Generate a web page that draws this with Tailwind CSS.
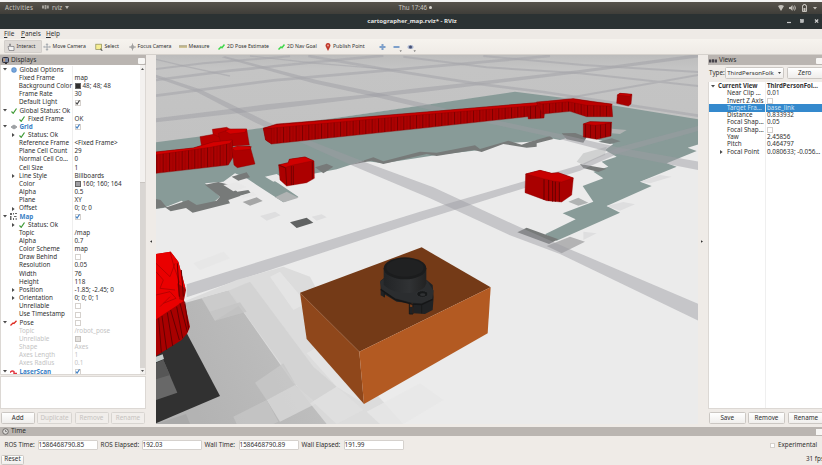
<!DOCTYPE html>
<html lang="en">
<head>
<meta charset="utf-8">
<title>cartographer_map.rviz* - RViz</title>
<script src="https://cdn.jsdelivr.net/npm/@tailwindcss/browser@4"></script>
</head>
<body class="w-[822px] h-[465px] overflow-hidden bg-[#efebe7] text-[#303030] text-[6.3px] leading-none whitespace-nowrap font-['Noto_Sans','Open_Sans',sans-serif]">
<div class="w-[822px] h-[465px] flex flex-col overflow-hidden">
  <!-- desktop bar -->
  <header class="h-[14px] shrink-0 border-t-2 border-[#f4f4f3] bg-linear-to-b from-[#57534b] to-[#3f3e39] grid grid-cols-3 items-center text-[#c9c6c0] text-[6.2px]">
    <div class="flex items-center pl-[5px]">
      <span class="tracking-[0.25px] w-[37px]">Activities</span>
      <svg class="w-[7px] h-[5px] mr-[3px]" viewBox="0 0 7 5"><path d="M0 .5h2v3H0zM2.6 0h1.7v4.2H2.600zM4.800 .5h2v3h-2z" fill="#a5a29b"/></svg>
      <span class="w-[12.500px]">rviz</span>
      <svg class="w-[4px] h-[3px]" viewBox="0 0 4 3"><path d="M0 0h4L2 3z" fill="#b9b6b0"/></svg>
    </div>
    <div class="flex items-center justify-center pl-[8px] gap-[1.500px]">Thu 17:46 <span class="w-[3px] h-[3px] rounded-full bg-[#d5d2cc]"></span></div>
    <div class="flex items-center justify-end pr-[5px]">
      <svg class="w-[40px] h-[8px]" viewBox="0 0 40 8" fill="#c3c0ba"><path d="M1 2Q4 0 7 2L4 7z"/><path d="M12 3h1.500l2-2v6l-2-2h-1.500z"/><path d="M16.300 2.500q1.300 1.500 0 3M17.500 1.500q2 2.500 0 5" fill="none" stroke="#c3c0ba" stroke-width=".9"/><path d="M25.500 1.500h1V.5h2v1h1V7.500h-4z" fill="none" stroke="#c3c0ba"/><path d="M26.500 4h2v3h-2zM36 3h4l-2 2.500z"/></svg>
    </div>
  </header>
  <!-- window title -->
  <div class="h-[15px] shrink-0 bg-[#2b3233] flex items-center text-[#e4e4e2]">
    <div class="w-[100px]"></div>
    <div class="flex-1 text-center font-bold text-[6.05px] pl-[2px]">cartographer_map.rviz* - RViz</div>
    <svg class="w-[100px] h-[15px]" viewBox="0 0 100 15"><path d="M65 8.500h4" stroke="#c8c8c8" stroke-width="1.200"/><rect x="78.500" y="5.500" width="3" height="3" fill="#b9bcbc" stroke="#d8d8d8" stroke-width=".5"/><path d="M93 5.500l3.200 3.200M96.200 5.500l-3.200 3.200" stroke="#d0d0d0" stroke-width="1.200"/></svg>
  </div>
  <!-- menu -->
  <nav class="h-[10px] shrink-0 bg-[#eeeae6] flex items-center pl-[4px] pt-[1px] text-[6.400px]">
    <span class="w-[17px]"><u>F</u>ile</span><span class="w-[25px]"><u>P</u>anels</span><span><u>H</u>elp</span>
  </nav>
  <!-- tools -->
  <div class="h-[16px] shrink-0 bg-linear-to-b from-[#f6f3ee] to-[#efebe6] border-b border-[#d5d1cc] flex items-center text-[5.150px]">
    <div class="w-[38px] h-[13px] ml-[4px] bg-[#dedad6] rounded-[1px] border border-[#d3cfcb] flex items-center pl-[2px] gap-[1.500px]"><svg class="w-[8px] h-[8px]" viewBox="0 0 8 8"><path d="M1 3.500h1.500V1h1v2.500H7V7.500H2z" fill="#f2f2f2" stroke="#77757a" stroke-width=".7"/></svg>Interact</div>
    <div class="w-[49px] ml-[1px] flex items-center gap-[1.500px]"><svg class="w-[8px] h-[8px]" viewBox="0 0 8 8"><path d="M4 0l1.500 2H4.600v1.500H6.500V2.500L8 4 6.500 5V4.500H4.600V6h1L4 8 2.500 6h1V4.500H1.500V5L0 4l1.500-1.500v1h2V2h-1z" fill="#a7acb1"/></svg>Move Camera</div>
    <div class="w-[34px] ml-[3px] flex items-center gap-[1.500px]"><svg class="w-[8px] h-[8px]" viewBox="0 0 8 8"><rect x=".8" y="1.200" width="5.800" height="5.200" fill="#f6ee93" stroke="#8b8b55" stroke-width=".7"/><path d="M5 5l3 2.500-2 .3z" fill="#555"/></svg>Select</div>
    <div class="w-[50px] flex items-center gap-[1.500px]"><svg class="w-[7px] h-[8px]" viewBox="0 0 8 8"><circle cx="4" cy="4" r="1.700" fill="none" stroke="#8e8e8e"/><path d="M4 0v8M0 4h8" stroke="#9b9b9b"/></svg>Focus Camera</div>
    <div class="w-[39px] flex items-center gap-[1.500px]"><svg class="w-[8px] h-[8px]" viewBox="0 0 8 8"><rect y="2.800" width="8" height="2.200" fill="#cfc396"/><path d="M0 2.800h8" stroke="#8a8566" stroke-width=".7"/></svg>Measure</div>
    <div class="w-[60px] flex items-center gap-[2px]"><svg class="w-[7px] h-[8px]" viewBox="0 0 7 8"><path d="M.5 6.500L3 4l1 .8L6.500 1.500" fill="none" stroke="#3dd648" stroke-width="1.500"/></svg>2D Pose Estimate</div>
    <div class="w-[46px] flex items-center gap-[2px]"><svg class="w-[7px] h-[8px]" viewBox="0 0 7 8"><path d="M.5 6.500L3 4l1 .8L6.500 1.500" fill="none" stroke="#3dd648" stroke-width="1.500"/></svg>2D Nav Goal</div>
    <div class="w-[50px] ml-[1px] flex items-center gap-[2px]"><svg class="w-[6px] h-[8px]" viewBox="0 0 6 8"><path d="M3 0a2.500 2.500 0 0 1 2 4L3 8 1 4a2.500 2.500 0 0 1 2-4z" fill="#c0392b"/><circle cx="3" cy="2.500" r=".9" fill="#f0a89f"/></svg>Publish Point</div>
    <svg class="w-[45px] h-[12px]" viewBox="0 0 45 12"><path d="M7.500 3v6M4.500 6h6" stroke="#7d9fca" stroke-width="2"/><path d="M18.500 6h6" stroke="#7d9fca" stroke-width="2"/><path d="M24.500 9.500h2.400l-1.200 1.300zM38.500 9.500h2.400l-1.200 1.300z" fill="#555"/><ellipse cx="35.500" cy="6" rx="3" ry="2" fill="#a9b4cf"/><circle cx="35.500" cy="6" r="1.500" fill="#454f72"/></svg>
  </div>

  <!-- docks and 3D view -->
  <main class="h-[372px] shrink-0 flex">
    <section class="w-[146px] flex flex-col">
      <div class="h-[10px] shrink-0 bg-[#bab5b1] flex items-center pl-[2px] pr-[1px] pt-[1px] text-[6.500px]">
        <svg class="w-[7px] h-[7px] mr-[2px]" viewBox="0 0 7 7"><rect x=".5" y=".5" width="6" height="5" rx="1" fill="#7c8ba8" stroke="#33313d"/><path d="M1.500 1.500h1.500v3H1.500z" fill="#c96"/><path d="M3 6.500h2" stroke="#333"/></svg>
        <span class="flex-1">Displays</span><span class="w-[7px] h-[6px] bg-[#f7f6f4] rounded-[1px]"></span>
      </div>
      <div class="h-[310px] shrink-0 flex border border-t-0 border-[#dcd8d4] bg-white overflow-hidden">
        <div id="displays" class="flex-1 h-[309px] pt-[0.8px] overflow-hidden"></div>
        <div class="w-[5.500px] bg-[#d9d6d3] flex flex-col items-center justify-between">
          <div class="w-full h-[118px] bg-[#f3f1ef] border-b border-[#c9c5c1] flex justify-center pt-[3px]"><svg class="w-[3px] h-[2px]" viewBox="0 0 3 2"><path d="M0 2h3L1.500 0z" fill="#555"/></svg></div>
          <div class="w-full h-[6px] bg-[#f3f1ef] flex justify-center pt-[2px]"><svg class="w-[3px] h-[2px]" viewBox="0 0 3 2"><path d="M0 0h3L1.500 2z" fill="#555"/></svg></div>
        </div>
      </div>
      <div class="h-[33px] shrink-0 mt-[1px] bg-white border border-[#dcd8d4]"></div>
      <div class="flex pt-[3px] pl-[1px] gap-[2.500px]">
        <div class="w-[33.500px] h-[11.500px] rounded-[1.500px] border border-[#cbc7c3] bg-linear-to-b from-white to-[#f0eeec] flex items-center justify-center">Add</div>
        <div class="w-[35px] h-[11.500px] rounded-[1.500px] border border-[#d8d5d1] bg-[#f1eeeb] text-[#c6c3c0] flex items-center justify-center">Duplicate</div>
        <div class="w-[34px] h-[11.500px] rounded-[1.500px] border border-[#d8d5d1] bg-[#f1eeeb] text-[#c6c3c0] flex items-center justify-center">Remove</div>
        <div class="w-[34px] h-[11.500px] rounded-[1.500px] border border-[#d8d5d1] bg-[#f1eeeb] text-[#c6c3c0] flex items-center justify-center">Rename</div>
      </div>
    </section>
    <div class="w-[10px] flex items-center justify-center pr-[1px]"><svg class="w-[2px] h-[3px]" viewBox="0 0 3 4"><path d="M3 0v4L0 2z" fill="#333"/></svg></div>

    <svg class="w-[542px] h-[369px] shrink-0" viewBox="18 15 1626 1107" preserveAspectRatio="none">
      <defs>
        <linearGradient id="sky" x1="0" y1="0" x2="0" y2="1"><stop offset="0" stop-color="#bcbcbc"/><stop offset=".15" stop-color="#c4c4c4"/><stop offset="1" stop-color="#c2c2c2"/></linearGradient>
        <linearGradient id="floor" gradientUnits="userSpaceOnUse" x1="100" y1="1000" x2="620" y2="760"><stop offset="0" stop-color="#b3b3b3"/><stop offset=".55" stop-color="#bdbdbd"/><stop offset="1" stop-color="#c9c9c9"/></linearGradient>
        <linearGradient id="cyl" x1="0" y1="0" x2="1" y2="0"><stop offset="0" stop-color="#222426"/><stop offset=".6" stop-color="#303234"/><stop offset="1" stop-color="#222"/></linearGradient>
        <pattern id="ribs" width="19" height="400" patternUnits="userSpaceOnUse"><rect width="19" height="400" fill="#ad0202"/><rect width="3" height="400" fill="#7c0000"/><rect x="9" width="4" height="400" fill="#a00000"/></pattern>
        <pattern id="ribs2" width="15" height="400" patternUnits="userSpaceOnUse"><rect width="15" height="400" fill="#a50202"/><rect width="3" height="400" fill="#7b0000"/></pattern>
      </defs>
      <rect x="18" y="15" width="1626" height="1107" fill="#ebebeb"/>
      <path d="M18 15H1645V212L1095 128 18 280z" fill="url(#sky)"/>
      <!-- scanned floor area -->
      <path d="M18 277L190 254 560 203 840 163 1095 125 1290 150 1645 208V283L1613 293 1640 303 1550 340 1580 350 1470 395 1505 408 1370 468 1410 488 1220 572 1185 553 1277 508 1238 490 1330 455 1298 408 1360 385 1330 365 1375 350 1355 335 1400 320 1365 300 1390 282 1340 268 1280 255 1230 270 1195 263 1140 275 1060 280 990 300 860 315 700 340 640 332 560 358 420 385 350 378 385 400 445 440 400 457 290 385 255 370 220 395 165 400 210 440 190 458 120 475 95 452 40 474 18 476z" fill="#889b98"/>
      <g fill="#777a79">
        <path d="M18 447L32 450 50 472 115 450 140 465 200 452 210 440 165 404 205 396 240 405 262 425 295 420 303 430 270 438 235 450 240 460 128 488 108 474 62 484 45 472 18 476z"/>
        <path d="M245 380L290 367 300 382 265 392zM495 352L530 341 550 350 520 370zM600 345L670 322 700 334 810 305 860 308 975 286 990 297 1075 272 1115 284 1140 275 1200 258 1210 267 1160 280 1160 290 1130 293 1060 282 995 306 972 300 860 318 830 312 700 342 665 332z"/>
        <path d="M420 517L470 503 490 518 440 534z" fill="#606262"/>
        <path d="M1235 250L1276 249 1310 262 1300 278 1250 268zM1290 342L1370 356 1345 366 1300 354z"/>
        <path d="M1102 547L1130 533 1225 568 1197 582z"/>
        <path d="M278 456L320 442 338 453 300 467z" fill="#a5a6a6"/>
      </g>
      <path d="M1345 275L1385 265 1412 274 1380 282z" fill="#7a8180"/>
      <path d="M375 442L410 425 446 443 402 457zM1255 455L1285 443 1315 458 1285 467zM1385 236L1430 240 1410 252 1385 250z" fill="#b0b3b3"/>
      <path d="M1190 588L1260 560 1305 575 1235 610z" fill="#b3b3b4"/>
      <path d="M345 380L380 372 400 385 370 395zM220 405L260 397 290 412 250 424zM270 437L310 425 320 435 280 445z" fill="#e8e8e8"/>
      <path d="M330 498L375 485 392 496 350 512zM485 500L515 493 530 502 500 512zM1370 468L1420 456 1455 463 1410 482zM1470 395L1530 375 1565 380 1500 400zM1300 570L1340 550 1300 545z" fill="#dededf"/>
      <path d="M1300 310L1370 290 1365 315 1330 330 1300 345 1280 335z" fill="#d0d1d1"/>
      <!-- ground grid -->
      <g fill="#9c9ca3" fill-opacity=".48">
        <path d="M110 703L810 485 1290 345 1410 290 1645 228V243L1410 308 1290 362 810 512 110 742z"/>
        <path d="M18 74L150 118 345 212 500 280 660 342 850 412 1110 532 1270 602 1645 762V812L1230 612 1080 556 840 445 610 348 470 285 320 220 140 126 18 83z"/>
        <path d="M225 19L500 90 700 132 1000 202 1230 252 1410 293 1645 335V360L1400 312 1220 265 980 212 680 142 490 100 215 22z"/>
        <path d="M18 205L350 163 640 134 800 115 975 96 1290 60 1645 12V22L1290 69 975 107 800 128 640 145 350 180 18 217z"/>
      </g>
      <g fill="none" stroke="#a6a6ac" stroke-opacity=".6" stroke-width="8">
        <path d="M18 137L370 91 840 50 1200 18M18 90L240 62 560 30 700 17" />
        <path d="M475 18L730 62 980 101 1180 126 1645 197"/>
        <path d="M18 57L160 40 420 19M760 20L1010 52 1290 70 1645 108M1000 18L1300 45 1645 66M1190 155L1390 120 1645 75" stroke-width="6"/>
        <path d="M18 28L110 50 240 78M300 18L500 40 720 58" stroke-width="4"/>
      </g>
      <!-- laser points -->
      <g stroke="#8e0000" stroke-width="1.200" stroke-linejoin="round">
        <path d="M340 235L380 222 840 185 1160 158 1178 168 1178 195 840 232 365 282 347 270z" fill="url(#ribs)"/>
        <path d="M340 235L380 224 840 185 1160 158 1174 165 840 192 365 234z" fill="#c80000"/>
        <path d="M340 235L365 235V282L347 270z" fill="#a60000"/>
        <path d="M1130 173L1172 166 1185 172 1182 204 1135 207z" fill="url(#ribs2)"/>
        <path d="M1160 158L1270 146 1385 162 1388 200 1310 200 1260 184 1178 192z" fill="url(#ribs)"/>
        <path d="M1160 156L1270 146 1330 156 1387 163 1380 168 1310 166 1255 155 1175 162z" fill="#bd0000"/>
        <path d="M1402 135L1410 130 1446 133 1443 162 1435 168 1400 160z" fill="#a90000"/><path d="M1402 135L1410 130 1446 133 1438 139z" fill="#c80000"/>
        <path d="M1300 222L1320 215 1385 217 1383 258 1340 268 1300 261z" fill="url(#ribs2)"/><path d="M1300 222L1320 215 1385 217 1360 223 1335 226z" fill="#c80000"/>
        <path d="M187 238L230 232 245 240 240 268 190 258z" fill="#bd0000"/>
        <path d="M150 260L190 253 215 264 210 292 155 292z" fill="#b80000"/>
        <path d="M205 250L240 238 290 237 298 285 215 290z" fill="#b20000"/><path d="M225 243L240 237 290 237 285 247 240 252z" fill="#d40000"/>
        <path d="M18 306L130 294 190 276 247 270 250 320 235 345 18 370z" fill="url(#ribs)"/>
        <path d="M18 306L130 294 190 276 247 270 240 280 180 292 18 314z" fill="#d40000"/>
        <path d="M245 294L300 288 315 342 262 353 252 345z" fill="#ad0000"/><path d="M245 294L262 288 304 290 300 298 255 302z" fill="#cf0000"/>
        <path d="M386 345L415 338 418 328 465 321 492 333 493 385 470 398 410 408 390 390z" fill="#ac0000"/>
        <path d="M386 345L415 338 418 328 465 321 490 332 425 346 407 352z" fill="#cf0000"/>
        <path d="M407 354L410 406M424 348V405M430 348V405M487 335V387M386 345L407 354" fill="none" stroke="#6e0000" stroke-width="2.500"/>
        <path d="M1127 372L1170 361 1205 370 1225 368 1270 384 1265 435 1235 456 1190 452 1125 428z" fill="#a90000"/>
        <path d="M1127 372L1170 361 1205 370 1225 368 1270 384 1235 396 1210 393 1180 386z" fill="#c90000"/>
        <path d="M1182 388V450M1196 390V453M1208 393V455M1216 395V455M1228 397V455" stroke="#650000" stroke-width="3"/>
      </g>
      <!-- lower-left floor cells -->
      <path d="M108 752L260 690 400 650 480 680 650 1000 760 1122H18V1000z" fill="#dcdcdc"/>
      <path d="M108 758L235 722 430 1000 560 1122H18V880z" fill="url(#floor)"/>
      <g fill-opacity=".8">
        <path d="M235 722L300 695 490 950 560 1010 480 1060 435 1000z" fill="#d1d1d1"/>
        <path d="M155 745L235 722 270 765 195 812z" fill="#cfcfcf"/><path d="M195 812L180 785 270 757 290 785z" fill="#c4c4c4"/>
        <path d="M315 998L400 940 438 1005 350 1050z" fill="#c8c8c8"/>
        <path d="M350 1050L435 1005 500 1060 390 1115z" fill="#d8d8d8"/>
        <path d="M250 1100L350 1050 385 1115 370 1122H260z" fill="#c6c6c6"/>
        <path d="M480 1060L560 1010 640 1080 560 1122H530z" fill="#e0e0e0"/>
        <path d="M560 1010L470 910 520 880 640 1060z" fill="#e5e5e5"/>
        <path d="M360 680L390 665 470 760 430 780zM130 640L220 605 240 625 150 660z" fill="#e6e6e6"/>
        <path d="M18 1122L108 1092 120 1122z" fill="#a6a6a6"/>
        <path d="M650 1085L810 1000 880 1050 760 1122H690z" fill="#e7e7e7"/>
      </g>
      <path d="M18 880L108 845 210 1038 18 1120z" fill="#313131"/>
      <path d="M18 940L40 930 82 1028 18 1050z" fill="#686868"/><path d="M18 940L40 930 60 975 18 988z" fill="#565656"/><path d="M18 920L38 913 42 927 18 937z" fill="#c4cccb"/>
      <g stroke-linejoin="round">
        <path d="M18 612L62 605 85 635 108 720 102 750 120 830 112 850 95 870 18 918z" fill="#a80000"/>
        <path d="M18 612L62 605 85 635 106 715 82 700 88 748 102 752 75 770 18 808z" fill="#ea0000"/>
        <path d="M18 640L60 680 75 640M18 665L40 690 30 715 75 720M60 605L72 650 90 700M18 735L60 725 78 745 40 760M30 770L60 740" fill="none" stroke="#b00000" stroke-width="2.500"/>
        <path d="M82 640L88 740M94 660L100 740M36 798L50 900M52 788L68 888M62 780L88 870M80 770L98 865M90 760L112 845M104 755L116 838M26 805L34 908" fill="none" stroke="#650000" stroke-width="3"/>
      </g>
      <!-- robot body -->
      <path d="M450 728L815 592 1022 712 628 905z" fill="#743a17"/>
      <path d="M450 728L628 905 642 1062 470 867z" fill="#8f471b"/>
      <path d="M628 905L1022 712 1013 850 642 1062z" fill="#b35a22"/>
      <!-- lidar -->
      <path d="M692 692L705 682 830 690 848 705 851 742 848 780 825 792 790 790V772L778 770V792H788V760L740 755 703 733V742L692 736z" fill="#202224"/>
      <path d="M690 695L708 680 830 690 851 722 846 748 815 760 785 758 735 745 695 720z" fill="#2b2d2f"/>
      <path d="M692 718L735 748 785 762 815 764 848 748" fill="none" stroke="#151617" stroke-width="4"/>
      <path d="M701 655V705Q735 735 785 728 825 722 829 700V655z" fill="url(#cyl)"/>
      <ellipse cx="765" cy="655" rx="64" ry="33" fill="#1b1c1d"/>
      <ellipse cx="765" cy="653" rx="56" ry="27" fill="#202122"/>
      <ellipse cx="817" cy="732" rx="17" ry="10" fill="#17191a" stroke="#303234" stroke-width="3"/><ellipse cx="818" cy="734" rx="8" ry="4" fill="#303234"/>
      <path d="M778 762V792H789V764M703 728V742M815 765V790" stroke="#17191a" stroke-width="3" fill="none"/>
    </svg>

    <div class="w-[10px] flex items-center justify-center pr-[3px]"><svg class="w-[2px] h-[3px]" viewBox="0 0 3 4"><path d="M0 0v4L3 2z" fill="#333"/></svg></div>
    <section class="w-[114px] flex flex-col overflow-hidden">
      <div class="h-[10px] shrink-0 bg-[#bab5b1] flex items-center pl-[1px] pt-[1px] text-[6.500px]">
        <svg class="w-[8px] h-[4px] mr-[2px]" viewBox="0 0 8 4"><path d="M0 .5h2.400v3H0zM3 .2h2v3.400H3zM5.600 .5H8v3H5.600z" fill="#46434a"/></svg>
        <span class="flex-1">Views</span><span class="w-[6px] h-[6px] bg-[#f7f6f4] rounded-l-[1px]"></span>
      </div>
      <div class="h-[17px] shrink-0 flex items-start pt-[2px] pl-[1px]">
        <span class="w-[18px] pt-[3px]">Type:</span>
        <div class="w-[59px] h-[12px] shrink-0 rounded-[1.500px] border border-[#cbc7c3] bg-linear-to-b from-white to-[#efedeb] flex items-center pl-[1.500px] pr-[2px]"><span class="flex-1 overflow-hidden text-[6.100px] leading-[10px]">ThirdPersonFolk</span><svg class="w-[3px] h-[2px] ml-[2px] shrink-0" viewBox="0 0 3 2"><path d="M0 0h3L1.500 2z" fill="#444"/></svg></div>
        <div class="w-[36px] h-[12px] shrink-0 ml-[3px] rounded-[1.500px] border border-[#cbc7c3] bg-linear-to-b from-white to-[#efedeb] flex items-center justify-center">Zero</div>
      </div>
      <div id="views" class="h-[327px] pt-[0.400px] shrink-0 bg-white border-b border-l border-[#dcd8d4] flex flex-col"></div>
      <div class="flex pt-[3px] pl-[1px] gap-[2.500px]">
        <div class="w-[36.500px] h-[11.500px] shrink-0 rounded-[1.500px] border border-[#cbc7c3] bg-linear-to-b from-white to-[#f0eeec] flex items-center justify-center">Save</div>
        <div class="w-[37px] h-[11.500px] shrink-0 rounded-[1.500px] border border-[#cbc7c3] bg-linear-to-b from-white to-[#f0eeec] flex items-center justify-center">Remove</div>
        <div class="w-[37px] h-[11.500px] shrink-0 rounded-[1.500px] border border-[#cbc7c3] bg-linear-to-b from-white to-[#f0eeec] flex items-center justify-center">Rename</div>
      </div>
    </section>
  </main>

  <!-- time panel -->
  <footer class="flex-1 flex flex-col">
    <div class="h-[9px] shrink-0 bg-[#bab5b1] flex items-center pl-[2px] text-[6.500px]">
      <svg class="w-[7px] h-[7px] mr-[2px]" viewBox="0 0 7 7"><circle cx="3.500" cy="3.500" r="2.800" fill="#dcdad8" stroke="#5a5856" stroke-width=".8"/><path d="M3.500 2v1.500h1.300" fill="none" stroke="#444" stroke-width=".6"/></svg>
      <span class="flex-1">Time</span><span class="w-[6px] h-[6px] bg-[#f7f6f4]"></span>
    </div>
    <div class="h-[18px] shrink-0 flex items-center pl-[4.500px]">
      <span class="w-[33px]">ROS Time:</span><span class="w-[60px] h-[10px] bg-white border border-[#d5d1cd] rounded-[1px] leading-[8px] text-[6.400px]">1586468790.85</span>
      <span class="w-[41px] ml-[3px]">ROS Elapsed:</span><span class="w-[60px] h-[10px] bg-white border border-[#d5d1cd] rounded-[1px] leading-[8px] text-[6.400px]">192.03</span>
      <span class="w-[34px] ml-[3px]">Wall Time:</span><span class="w-[60px] h-[10px] bg-white border border-[#d5d1cd] rounded-[1px] leading-[8px] text-[6.400px]">1586468790.89</span>
      <span class="w-[42px] ml-[3px]">Wall Elapsed:</span><span class="w-[60px] h-[10px] bg-white border border-[#d5d1cd] rounded-[1px] leading-[8px] text-[6.400px]">191.99</span>
      <span class="w-[5px] h-[5px] bg-white border border-[#d5d1cd] ml-auto mr-[3px]"></span><span class="w-[44px]">Experimental</span>
    </div>
    <div class="flex-1 flex items-start justify-between pl-[1px] overflow-hidden">
      <div class="w-[23px] h-[10px] mt-[0.500px] rounded-[1.500px] border border-[#cbc7c3] bg-linear-to-b from-white to-[#f0eeec] flex items-center justify-center">Reset</div>
      <span class="w-[16px] mt-[2px]">31 fps</span>
    </div>
  </footer>
</div>
<script>
const check = '<svg class="w-[6px] h-[6px] shrink-0" viewBox="0 0 6 6"><path d="M.5 3.500L2.200 5.300 5.500.5" fill="none" stroke="#3f9a35" stroke-width="1.200"/></svg>';
const icons = {
  globe: '<svg class="w-[6px] h-[6px]" viewBox="0 0 6 6"><circle cx="3" cy="3" r="2.700" fill="#5f93cf"/><path d="M3 .5v5M.5 3h5" stroke="#8db4e2" stroke-width=".7"/></svg>',
  ok: check,
  grid: '<svg class="w-[6px] h-[6px]" viewBox="0 0 6 6"><path d="M0 3l3-2 3 2-3 2z" fill="#b5b8bb" stroke="#83868a" stroke-width=".7"/><path d="M1.500 2l3 2M4.500 2l-3 2" stroke="#83868a" stroke-width=".5"/></svg>',
  map: '<svg class="w-[7px] h-[7px]" viewBox="0 0 7 7"><path d="M0 0h2v2H0zM0 3h1.500v4H0zM3 0h1v1.500H3zM5 0h2v1H5zM4 3h2.500v1H4zM3 5h1v2H3z" fill="#666"/><path d="M5.500 5h1.500v2H5.500z" fill="#999"/></svg>',
  pose: '<svg class="w-[7px] h-[6px]" viewBox="0 0 7 6"><path d="M.5 5.500L3 3l1 .5L6.500 .7" fill="none" stroke="#dd2c22" stroke-width="1.300"/></svg>',
  scan: '<svg class="w-[7px] h-[6px]" viewBox="0 0 7 6"><path d="M0 3.500Q2 1 4 2.500V4.500H7" fill="none" stroke="#e2333c" stroke-width="1.400"/></svg>'
};
const box = on => '<span class="w-[6px] h-[6px] bg-white border border-[#d5d1cd] flex items-center justify-center">' + (on ? '<svg class="w-[5px] h-[5px] shrink-0" viewBox="0 0 6 6"><path d="M1 3l1.500 2L5.500.5" fill="none" stroke="' + (on === 2 ? '#3f7fc4' : '#444') + '" stroke-width="1.300"/></svg>' : '') + '</span>';
const grayBox = '<span class="w-[6px] h-[6px] bg-[#e4e1de] border border-[#c5c1bd]"></span>';
const swatch = c => '<span class="w-[6px] h-[6px] mr-[2px] border border-[#666]" style="background:' + c + '"></span>';
const down = '<svg class="w-[4px] h-[3px]" viewBox="0 0 4 3"><path d="M0 0h4L2 2.600z" fill="#4a4a4a"/></svg>';
const right = '<svg class="w-[3px] h-[4px]" viewBox="0 0 3 4"><path d="M0 0v4L2.600 2z" fill="#4a4a4a"/></svg>';
// t/b = top level, s/f = status line, c = child, x = expandable child, d = disabled child
const rows = [
 ['t','Global Options','','globe'],['c','Fixed Frame','map'],['c','Background Color',swatch('#303030')+'48; 48; 48'],['c','Frame Rate','30'],['c','Default Light',box(1)],
 ['t','Global Status: Ok','','ok'],['f','Fixed Frame','OK'],
 ['b','Grid',box(2),'grid'],['s','Status: Ok',''],['c','Reference Frame','&lt;Fixed Frame&gt;'],['c','Plane Cell Count','29'],['c','Normal Cell Co…','0'],['c','Cell Size','1'],['x','Line Style','Billboards'],['c','Color',swatch('#a0a0a4')+'160; 160; 164'],['c','Alpha','0.5'],['c','Plane','XY'],['x','Offset','0; 0; 0'],
 ['b','Map',box(2),'map'],['s','Status: Ok',''],['c','Topic','/map'],['c','Alpha','0.7'],['c','Color Scheme','map'],['c','Draw Behind',box(0)],['c','Resolution','0.05'],['c','Width','76'],['c','Height','118'],['x','Position','-1.85; -2.45; 0'],['x','Orientation','0; 0; 0; 1'],['c','Unreliable',box(0)],['c','Use Timestamp',box(0)],
 ['t','Pose',box(0),'pose'],['d','Topic','/robot_pose'],['d','Unreliable',grayBox],['d','Shape','Axes'],['d','Axes Length','1'],['d','Axes Radius','0.1'],
 ['b','LaserScan',box(2),'scan']
];
document.getElementById('displays').innerHTML = rows.map(([k,n,v,i]) => {
  let left;
  if (k === 't' || k === 'b') left = '<span class="w-[7px] pl-[1.500px]">' + down + '</span><span class="w-[11.500px] flex justify-center">' + icons[i] + '</span><span class="' + (k === 'b' ? 'text-[#3a7fc6] font-bold' : '') + '">' + n + '</span>';
  else if (k === 's' || k === 'f') left = '<span class="w-[18px] pl-[11px]">' + (k === 's' ? right : '') + '</span><span class="w-[9px]">' + check + '</span><span>' + n + '</span>';
  else left = '<span class="w-[18px] pl-[11px]">' + (k === 'x' ? right : '') + '</span><span>' + n + '</span>';
  return '<div class="h-[8.167px] flex items-center ' + (k === 'd' ? 'text-[#c4c4c4]' : '') + '"><div class="w-[72px] h-full shrink-0 flex items-center border-r border-[#efefef]">' + left + '</div><div class="pl-[1.500px] flex items-center">' + v + '</div></div>';
}).join('');
const views = [['h','Current View','ThirdPersonFol…'],['c','Near Clip …','0.01'],['c','Invert Z Axis',box(0)],['sel','Target Fra…','base_link'],['c','Distance','0.833932'],['c','Focal Shap…','0.05'],['c','Focal Shap…',box(0)],['c','Yaw','2.45856'],['c','Pitch','0.464797'],['x','Focal Point','0.080633; -0.056…']];
document.getElementById('views').innerHTML = views.map(([k,n,v]) =>
  '<div class="h-[7.320px] shrink-0 flex items-center ' + (k === 'h' ? 'font-bold text-[6.100px]' : k === 'sel' ? 'bg-[#3489cd] text-[#cfe3f5]' : '') + '"><div class="w-[57px] h-full shrink-0 flex items-center border-r border-[#efefef]">' +
  (k === 'h' ? '<span class="w-[9px] pl-[2px]">' + down + '</span>' : '<span class="w-[18px] pl-[11px]">' + (k === 'x' ? right : '') + '</span>') + '<span>' + n + '</span></div><div class="pl-[1px] flex items-center">' + v + '</div></div>').join('') + '<div class="w-[57px] flex-1 border-r border-[#efefef]"></div>';
</script>
</body>
</html>
